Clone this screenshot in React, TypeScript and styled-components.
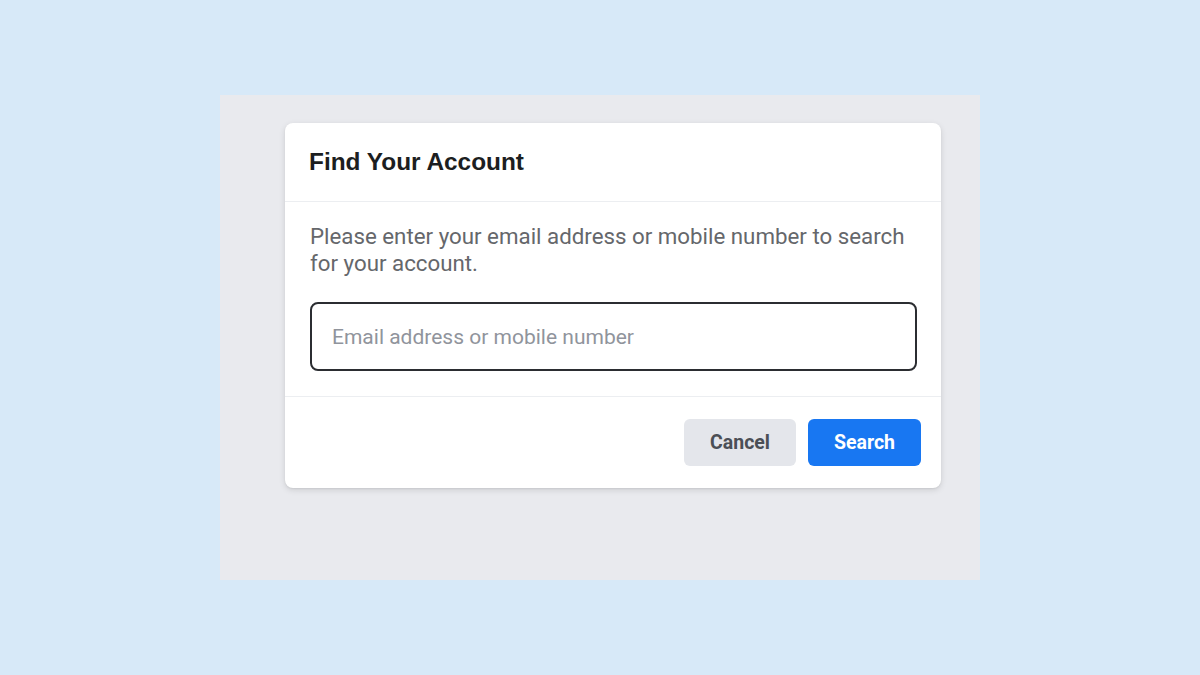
import React from 'react';
import styled, { createGlobalStyle } from 'styled-components';

const GlobalStyle = createGlobalStyle`
  html, body {
    margin: 0;
    padding: 0;
    background: #d7e9f8;
  }
  * {
    box-sizing: border-box;
  }
`;

const Page = styled.div`
  width: 1200px;
  height: 675px;
  padding-top: 95px;
  display: flex;
  justify-content: center;
  align-items: flex-start;
`;

const Backdrop = styled.div`
  width: 760px;
  height: 485px;
  background: #e9eaee;
  padding: 28px 39px 0 65px;
`;

const Card = styled.div`
  width: 656px;
  background: #fff;
  border-radius: 8px;
  box-shadow: 0 2px 6px rgba(0, 0, 0, 0.12), 0 1px 2px rgba(0, 0, 0, 0.06);
  font-family: Roboto, 'Liberation Sans', sans-serif;
`;

const Header = styled.div`
  height: 79px;
  padding: 0 24px;
  display: flex;
  align-items: center;
  border-bottom: 1px solid #eceef1;
`;

const Title = styled.h2`
  margin: 0;
  font-family: 'Liberation Sans', Arial, sans-serif;
  font-size: 24.4px;
  font-weight: 700;
  color: #1c1e21;
`;

const Body = styled.div`
  padding: 21px 24px 25px 25px;
  border-bottom: 1px solid #eceef1;
`;

const Text = styled.p`
  margin: 0 0 25px;
  font-size: 22.3px;
  line-height: 27px;
  color: #65676b;
`;

const Input = styled.input`
  display: block;
  width: 607px;
  height: 69px;
  border: 2px solid #2b2d31;
  border-radius: 8px;
  padding: 0 20px;
  font-family: inherit;
  font-size: 21px;
  color: #1c1e21;
  outline: none;

  &::placeholder {
    color: #90949c;
  }
`;

const Footer = styled.div`
  display: flex;
  justify-content: flex-end;
  gap: 12px;
  padding: 22px 20px 22px;
`;

const Button = styled.button<{ $primary?: boolean }>`
  height: 47px;
  width: ${p => (p.$primary ? '113px' : '112px')};
  padding: 0;
  border: none;
  border-radius: 6px;
  font-family: inherit;
  font-size: 19.5px;
  font-weight: 700;
  cursor: pointer;
  background: ${p => (p.$primary ? '#1877f2' : '#e4e6eb')};
  color: ${p => (p.$primary ? '#fff' : '#4b4f56')};
`;

function App() {
  return (
    <>
      <GlobalStyle />
      <Page>
        <Backdrop>
          <Card>
            <Header>
              <Title>Find Your Account</Title>
            </Header>
            <Body>
              <Text>
                Please enter your email address or mobile number to search for
                your account.
              </Text>
              <Input placeholder="Email address or mobile number" />
            </Body>
            <Footer>
              <Button>Cancel</Button>
              <Button $primary>Search</Button>
            </Footer>
          </Card>
        </Backdrop>
      </Page>
    </>
  );
}

export default App;
